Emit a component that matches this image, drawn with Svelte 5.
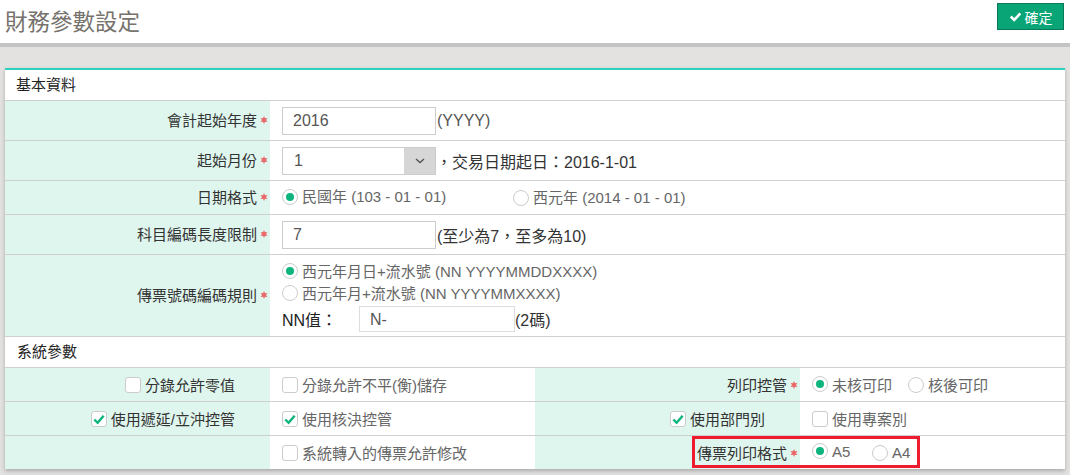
<script>
  // 財務參數設定 form
  const tick = 'M2.5 7.5 L6 11 L12.5 3.5';
</script>

{#snippet star()}<svg class="star" viewBox="0 0 8 8" width="8" height="8"><path d="M4 0 L5 2.3 L7.5 2 L6 4 L7.5 6 L5 5.7 L4 8 L3 5.7 L.5 6 L2 4 L.5 2 L3 2.3 Z" fill="#e8686a"/></svg>{/snippet}

{#snippet radio(on, text)}
  <span class="opt"><span class="radio" class:on></span><span>{text}</span></span>
{/snippet}

{#snippet check(on, text)}
  <span class="opt">
    <span class="box">
      {#if on}<svg viewBox="0 0 15 15" width="15" height="15"><path d={tick} fill="none" stroke="#0db47e" stroke-width="2.6"/></svg>{/if}
    </span>
    <span>{text}</span>
  </span>
{/snippet}

<div class="page">
  <header class="top">
    <h1>財務參數設定</h1>
    <button class="ok">
      <svg viewBox="0 0 15 15" width="13" height="13"><path d="M2 7.5 L6 11.5 L13 4" fill="none" stroke="#fff" stroke-width="3"/></svg>
      確定
    </button>
  </header>

  <main class="panel">
    <div class="section">基本資料</div>

    <div class="row h40">
      <div class="label">會計起始年度{@render star()}</div>
      <div class="val"><span class="input w154">2016</span><span class="txt">(YYYY)</span></div>
    </div>
    <div class="row h40">
      <div class="label">起始月份{@render star()}</div>
      <div class="val">
        <span class="select">
          <span class="sel-text">1</span>
          <span class="sel-arrow"><svg viewBox="0 0 10 6" width="10" height="6"><path d="M1 1 L5 4.5 L9 1" fill="none" stroke="#555" stroke-width="1.4"/></svg></span>
        </span>
        <span class="txt dark after-select">，交易日期起日：2016-1-01</span>
      </div>
    </div>
    <div class="row h34">
      <div class="label">日期格式{@render star()}</div>
      <div class="val">
        <span class="slot w231">{@render radio(true, '民國年 (103 - 01 - 01)')}</span>
        {@render radio(false, '西元年 (2014 - 01 - 01)')}
      </div>
    </div>
    <div class="row h40">
      <div class="label">科目編碼長度限制{@render star()}</div>
      <div class="val"><span class="input w154">7</span><span class="txt dark">(至少為7，至多為10)</span></div>
    </div>
    <div class="row h82">
      <div class="label">傳票號碼編碼規則{@render star()}</div>
      <div class="val stack">
        {@render radio(true, '西元年月日+流水號 (NN YYYYMMDDXXXX)')}
        {@render radio(false, '西元年月+流水號 (NN YYYYMMXXXX)')}
        <div class="nn">
          <span class="nn-label">NN值：</span>
          <span class="input nn-input">N-</span>
          <span class="txt dark nn-after">(2碼)</span>
        </div>
      </div>
    </div>

    <div class="section sys">系統參數</div>

    <div class="grid">
      <div class="label">{@render check(false, '分錄允許零值')}<b class="pad"></b></div>
      <div class="val">{@render check(false, '分錄允許不平(衡)儲存')}</div>
      <div class="label">列印控管{@render star()}</div>
      <div class="val">
        <span class="slot w96">{@render radio(true, '未核可印')}</span>
        {@render radio(false, '核後可印')}
      </div>

      <div class="label">{@render check(true, '使用遞延/立沖控管')}<b class="pad"></b></div>
      <div class="val">{@render check(true, '使用核決控管')}</div>
      <div class="label">{@render check(true, '使用部門別')}<b class="pad"></b></div>
      <div class="val">{@render check(false, '使用專案別')}</div>

      <div class="label"></div>
      <div class="val">{@render check(false, '系統轉入的傳票允許修改')}</div>
      <div class="label">傳票列印格式{@render star()}</div>
      <div class="val">
        <span class="slot w60">{@render radio(true, 'A5')}</span>
        {@render radio(false, 'A4')}
      </div>
      <div class="mark"></div>
    </div>
  </main>
</div>

<style>
  :global(body) {
    margin: 0;
    background: #e3e2e0;
    font-family: "Liberation Sans", "Noto Sans CJK TC", sans-serif;
    font-size: 15px;
    color: #333;
  }
  .page { width: 1070px; height: 475px; overflow: hidden; }

  .top {
    height: 43px;
    background: #fff;
    border-bottom: 4px solid #c4c4c4;
    display: flex;
    justify-content: space-between;
    align-items: flex-start;
    padding: 0 6px 0 5px;
  }
  h1 {
    margin: 7px 0 0;
    font-size: 22.5px;
    line-height: 32px;
    font-weight: 400;
    color: #76726c;
  }
  .ok {
    margin-top: 3px;
    width: 67px;
    height: 27px;
    background: #0aa576;
    border: 1px solid #08795a;
    color: #fff;
    font: 14px "Noto Sans CJK TC", sans-serif;
    display: flex;
    align-items: center;
    justify-content: center;
    gap: 3px;
    padding: 0;
  }

  .panel {
    margin: 21px 5px 0;
    background: #fff;
    border-top: 2px solid #2ed1bd;
    box-shadow: 0 2px 4px rgba(0, 0, 0, .25);
  }
  .section {
    height: 30px;
    line-height: 30px;
    padding-left: 11px;
    border-bottom: 1px solid #cfcfcf;
    color: #222;
  }
  .section.sys { padding-left: 12px; }

  .row {
    display: grid;
    grid-template-columns: 265px 1fr;
    border-bottom: 1px solid #cfcfcf;
  }
  .row .label { padding-bottom: 2px; box-sizing: border-box; }
  .h40 { height: 39px; }
  .h34 { height: 33px; }
  .h82 { height: 81px; }

  .grid {
    position: relative;
    display: grid;
    grid-template-columns: repeat(4, 265px);
    grid-auto-rows: 33px;
    row-gap: 1px;
    background: #cfcfcf;
  }

  .label {
    background: #dff6ee;
    display: flex;
    align-items: center;
    justify-content: flex-end;
    color: #333;
  }
  .val {
    background: #fff;
    display: flex;
    align-items: center;
    padding-left: 12px;
    color: #666;
  }
  .pad { width: 35px; }

  .star { margin: 1px 2px 0 3px; flex: none; }

  .input {
    box-sizing: border-box;
    height: 28px;
    line-height: 26px;
    border: 1px solid #ccc;
    padding-left: 10px;
    font-size: 16px;
    color: #555;
    background: #fff;
  }
  .w154 { width: 154px; }
  .txt { margin-left: 1px; font-size: 16px; color: #555; }
  .txt.dark { color: #333; }
  .after-select { margin-left: 0; }

  .select {
    box-sizing: border-box;
    width: 154px;
    height: 28px;
    border: 1px solid #ccc;
    display: flex;
    background: #fff;
  }
  .sel-text { flex: 1; padding-left: 11px; line-height: 26px; font-size: 16px; color: #555; }
  .sel-arrow {
    width: 31px;
    background: #d6d6d6;
    display: flex;
    align-items: center;
    justify-content: center;
  }

  .opt { display: inline-flex; align-items: center; gap: 4px; white-space: nowrap; }
  .row .opt > span:last-child { margin-top: -2px; }
  .radio {
    box-sizing: border-box;
    width: 16px;
    height: 16px;
    border-radius: 50%;
    border: 1px solid #ccc;
    background: #fff;
    position: relative;
    flex: none;
  }
  .radio.on::after {
    content: "";
    position: absolute;
    left: 3px;
    top: 3px;
    width: 8px;
    height: 8px;
    border-radius: 50%;
    background: #0db47e;
  }
  .box {
    box-sizing: border-box;
    width: 16px;
    height: 16px;
    border-radius: 3px;
    border: 1px solid #ccc;
    background: #fff;
    flex: none;
    display: flex;
  }

  .slot { display: inline-block; }
  .w231 { width: 231px; }
  .w96 { width: 96px; }
  .w60 { width: 60px; }

  .stack { flex-direction: column; align-items: flex-start; justify-content: flex-start; padding-top: 5px; box-sizing: border-box; }
  .stack .opt { height: 22px; }
  .nn { display: flex; align-items: center; margin-top: 2px; }
  .nn-label { width: 77px; font-size: 16px; color: #222; }
  .nn-input { width: 156px; height: 26px; line-height: 25px; border-color: #ddd; }
  .nn-after { margin-left: 0; }

  /* 紅框：傳票列印格式 */
  .mark {
    position: absolute;
    left: 687px;
    top: 68px;
    width: 228px;
    height: 32px;
    border: 3px solid #ee1c2e;
    box-sizing: border-box;
  }
</style>
